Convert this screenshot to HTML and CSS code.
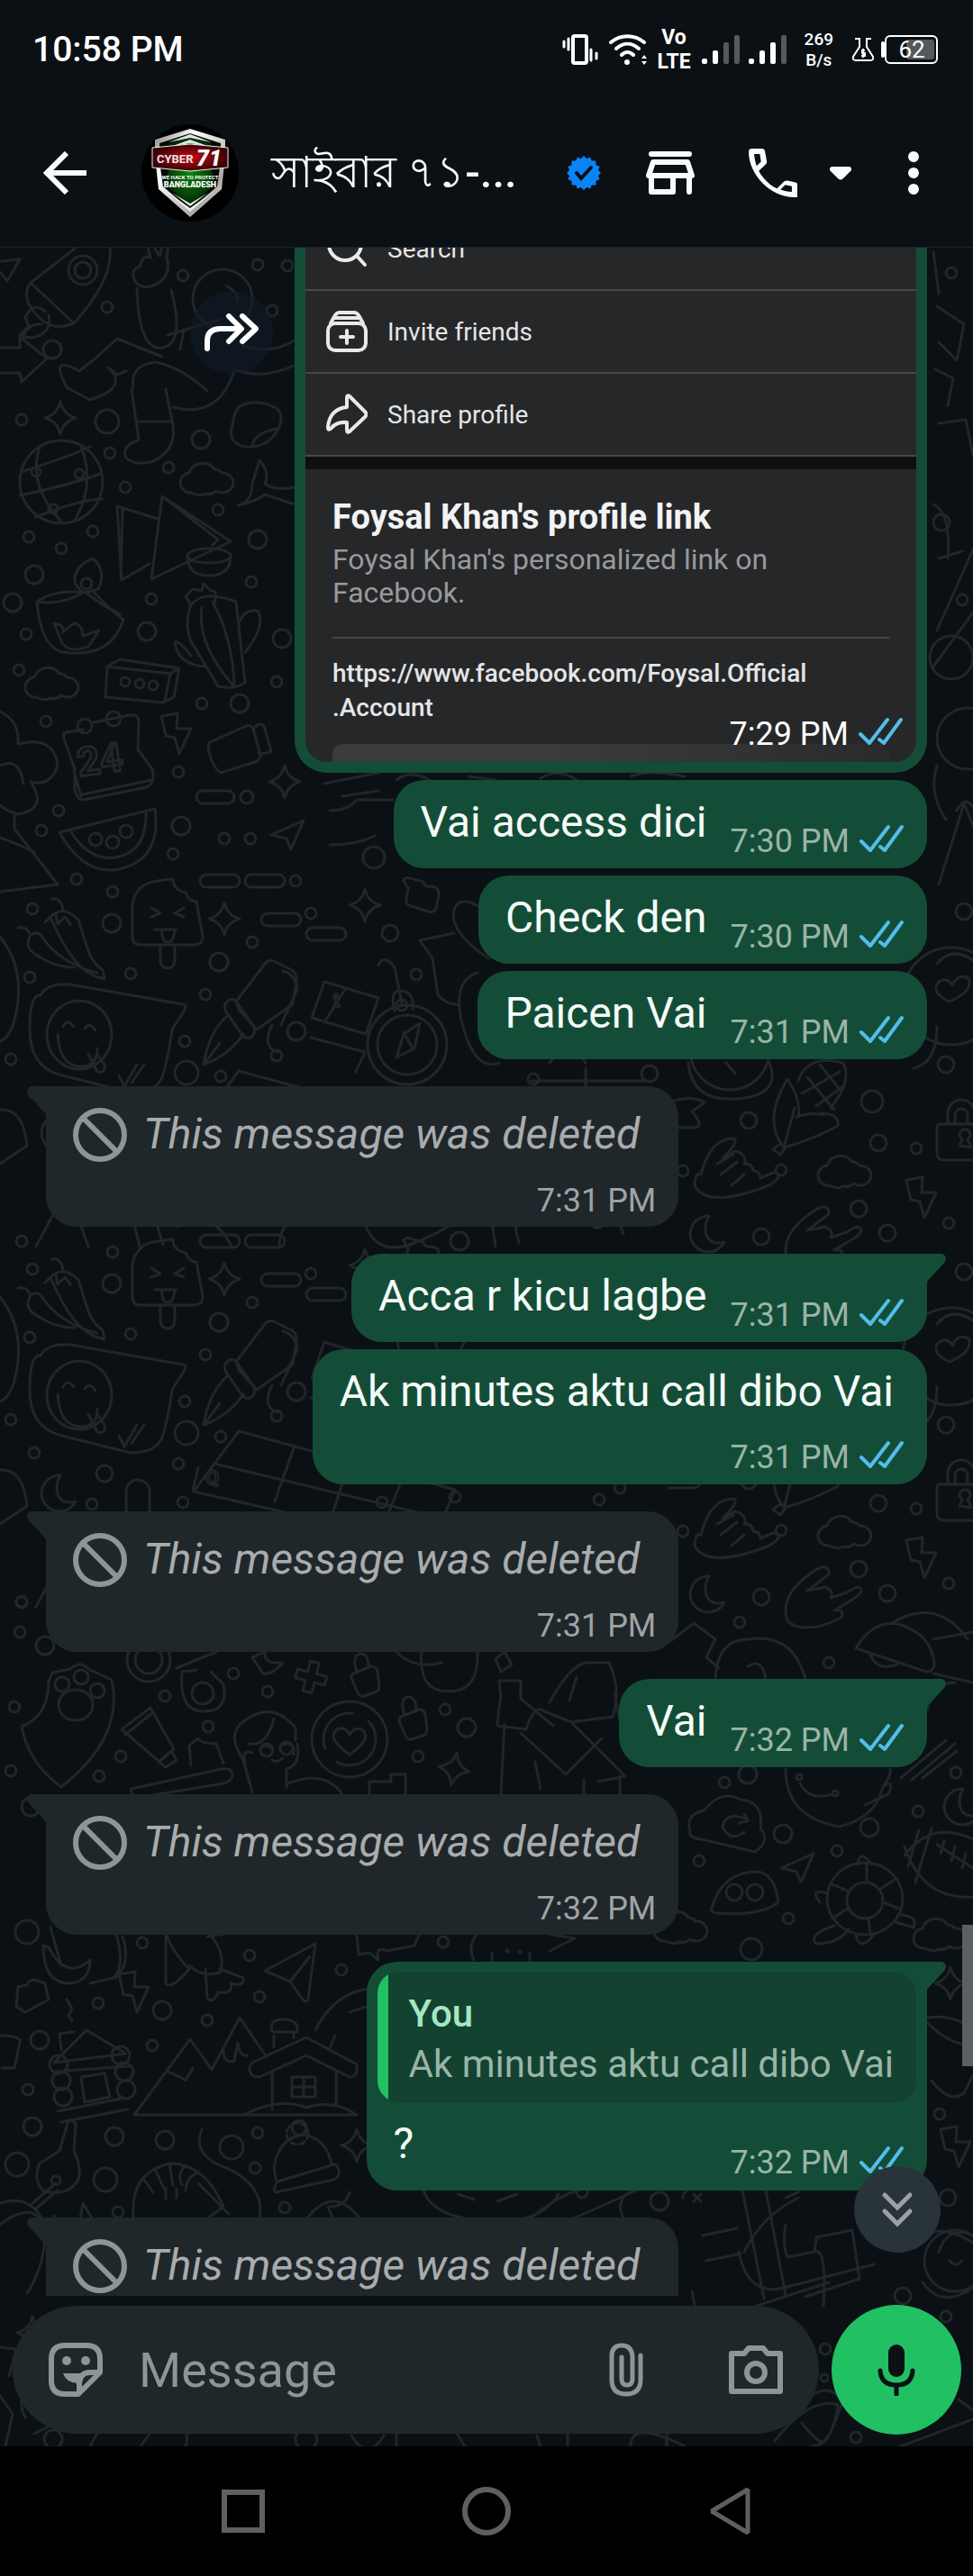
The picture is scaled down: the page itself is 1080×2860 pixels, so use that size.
FILE: index.html
```html
<!DOCTYPE html>
<html lang="en">
<head>
    <meta charset="UTF-8">
    <meta name="viewport" content="width=device-width, initial-scale=1.0">
    <title>Chat</title>
    <link rel="stylesheet" href="styles.css">
</head>
<body>
    <!-- shared icons -->
    <svg class="sprite" aria-hidden="true">
        <symbol id="ticks" viewBox="0 0 50 32">
            <path d="M3 19l10 10L33 3M24 25l5 4L48 3" fill="none" stroke="#53bdeb" stroke-width="4" stroke-linecap="round" stroke-linejoin="round"/>
        </symbol>
        <symbol id="blocked" viewBox="0 0 60 60">
            <circle cx="30" cy="30" r="27" fill="none" stroke="#8c9598" stroke-width="6"/>
            <path d="M11 11l38 38" stroke="#8c9598" stroke-width="6"/>
        </symbol>
    </svg>

    <div class="statusbar">
        <span class="clock">10:58 PM</span>
        <svg class="s-vibrate" width="40" height="34" viewBox="0 0 40 34" fill="none" stroke="#fff" stroke-linecap="round">
            <rect x="12" y="2" width="15" height="30" rx="2" stroke-width="4"/>
            <path d="M2 8v6M7 5v12M32 17v12M38 21v6" stroke-width="3"/>
        </svg>
        <svg class="s-wifi" width="42" height="34" viewBox="0 0 42 34" fill="none" stroke="#fff" stroke-width="4" stroke-linecap="round">
            <path d="M2 9c11-9 26-9 37 0M8 16c8-7 17-7 25 0M14 23c4-4 9-4 13 0"/>
            <circle cx="20" cy="31" r="3" fill="#fff" stroke="none"/>
            <path d="M36 27l3-4 3 4zM36 30l3 4 3-4z" fill="#fff" stroke="none"/>
        </svg>
        <span class="volte"><span>Vo</span><span>LTE</span></span>
        <svg class="s-signal" width="42" height="34" viewBox="0 0 42 34" fill="#fff">
            <rect x="0" y="27" width="6" height="6" rx="2"/><rect x="12" y="18" width="6" height="15" rx="2"/>
            <rect x="24" y="9" width="6" height="24" rx="2" fill="#55595c"/><rect x="36" y="1" width="6" height="32" rx="2" fill="#55595c"/>
        </svg>
        <svg class="s-signal2" width="42" height="34" viewBox="0 0 42 34" fill="#fff">
            <rect x="0" y="27" width="6" height="6" rx="2"/><rect x="12" y="18" width="6" height="15" rx="2"/>
            <rect x="24" y="9" width="6" height="24" rx="2"/><rect x="36" y="1" width="6" height="32" rx="2" fill="#55595c"/>
        </svg>
        <span class="speed"><span>269</span><span>B/s</span></span>
        <svg class="s-flask" width="26" height="28" viewBox="0 0 26 28" fill="none" stroke="#fff" stroke-width="2">
            <path d="M4 2h5v9L2 22q-1 4 3 4h16q4 0 3-4L17 11V2h5"/>
            <path d="M15 15h-3v3h3v3h-4M13 13v10"/>
        </svg>
        <svg class="s-battery" width="65" height="34" viewBox="0 0 65 34">
            <path d="M3 10v14" stroke="#fff" stroke-width="4" stroke-linecap="round"/>
            <rect x="29" y="6" width="31" height="22" rx="3" fill="#55595c"/>
            <rect x="6" y="2" width="57" height="30" rx="5" fill="none" stroke="#fff" stroke-width="2"/>
            <text x="35" y="26" class="battery-text" text-anchor="middle">62</text>
        </svg>
    </div>

    <header class="header">
        <button class="icon-btn back" aria-label="Back">
            <svg width="48" height="48" viewBox="0 0 48 48" fill="none" stroke="#f7fbfc" stroke-width="6" stroke-linejoin="miter">
                <path d="M26 2L4 24l22 22M4 24h44"/>
            </svg>
        </button>
        <svg class="avatar" width="108" height="108" viewBox="0 0 108 108">
            <defs>
                <radialGradient id="green"><stop offset="0" stop-color="#0c8a0c"/><stop offset="1" stop-color="#022a05"/></radialGradient>
                <radialGradient id="red"><stop offset="0" stop-color="#c80a12"/><stop offset="1" stop-color="#3a0205"/></radialGradient>
                <linearGradient id="silver" x2="1" y2="1"><stop offset="0" stop-color="#777"/><stop offset=".3" stop-color="#fff"/><stop offset=".75" stop-color="#aaa"/><stop offset="1" stop-color="#fff"/></linearGradient>
            </defs>
            <circle cx="54" cy="54" r="54" fill="#000"/>
            <path d="M54 5L15 17v19l4 36 35 31 35-31 4-36V17z" fill="url(#silver)"/>
            <path d="M54 10L20 21v20l4 28 30 26 30-26 4-28V21z" fill="#020a03"/>
            <path d="M54 14L31 21v26l-5 20 28 22 28-22-5-20V21z" fill="url(#green)"/>
            <path d="M30 20l24-9 24 9-24-5zM32 25l22-8 22 8-22-4z" fill="#dfe8df"/>
            <path d="M26 73l28 20 28-20-28 24zM34 76l20 15 20-15-20 12z" fill="#e8efe8"/>
            <path d="M12 26l42-4 42 4v22l-42 4-42-4z" fill="url(#red)" stroke="#eee" stroke-width="1"/>
            <text x="17" y="43" class="av-cyber">CYBER</text>
            <text x="61" y="46" class="av-71">71</text>
            <text x="54" y="61" class="av-line" text-anchor="middle">WE HACK TO PROTECT</text>
            <text x="54" y="70" class="av-name" text-anchor="middle">BANGLADESH</text>
        </svg>
        <h1 class="title" lang="bn">সাইবার ৭১-...</h1>
        <svg class="badge" width="38" height="38" viewBox="-19 -19 38 38">
            <g fill="#0a84f5">
                <circle r="16"/>
                <path d="M0-19l6 6h-12zM0 19l6-6h-12zM19 0l-6 6v-12zM-19 0l6 6v-12z"/>
                <path d="M0-19l6 6h-12zM0 19l6-6h-12zM19 0l-6 6v-12zM-19 0l6 6v-12z" transform="rotate(22)"/>
                <path d="M0-19l6 6h-12zM0 19l6-6h-12zM19 0l-6 6v-12zM-19 0l6 6v-12z" transform="rotate(45)"/>
                <path d="M0-19l6 6h-12zM0 19l6-6h-12zM19 0l-6 6v-12zM-19 0l6 6v-12z" transform="rotate(68)"/>
            </g>
            <path d="M-8 0l5 6L8-6" fill="none" stroke="#0b1014" stroke-width="4" stroke-linecap="round"/>
        </svg>
        <button class="icon-btn store" aria-label="Catalog">
            <svg width="54" height="48" viewBox="0 0 54 48" fill="none" stroke="#f7fbfc" stroke-width="6" stroke-linecap="round" stroke-linejoin="round">
                <path d="M6 3h42M8 12h38l5 15H3zM6 28v17h24V28M48 28v17"/>
            </svg>
        </button>
        <button class="icon-btn phone" aria-label="Call">
            <svg width="54" height="54" viewBox="0 0 24 24" fill="#f7fbfc">
                <path d="M22.600 24q-4.200 0-8.300-1.800t-7.400-5.100q-3.300-3.300-5.100-7.400T0 1.400Q0 .8.400.4T1.400 0h5.200q.5 0 .9.300t.5.800L8.900 6q.1.600 0 1t-.4.700L5 11q.7 1.400 1.700 2.700t2.200 2.400q1.200 1.200 2.400 2.100t2.700 1.500l3.200-3.300q.4-.4.900-.5t1-.1l4 .9q.6.200.9.500t.3.900v5.400q0 .6-.4 1t-1.300.4zM3.900 8.500L6.100 6.400 5.500 2.700H2.700q.1 1.500.4 2.900t.8 2.900zM15.700 20.200q1.300.6 2.700.8t2.900.3v-2.800L18 17.900z"/>
            </svg>
        </button>
        <button class="icon-btn caret" aria-label="Call options">
            <svg width="24" height="15" viewBox="0 0 24 15" fill="#f7fbfc">
                <path d="M3 0h18q3 0 3 3 0 2-2 3l-7 7q-3 3-6 0L2 6Q0 5 0 3q0-3 3-3z"/>
            </svg>
        </button>
        <button class="icon-btn more" aria-label="More">
            <svg width="12" height="48" viewBox="0 0 12 48" fill="#f7fbfc">
                <circle cx="6" cy="6" r="6"/><circle cx="6" cy="24" r="6"/><circle cx="6" cy="42" r="6"/>
            </svg>
        </button>
    </header>

    <main class="chat">
        <!-- doodle wallpaper, the middle band repeats 400 lower -->
        <svg class="wallpaper" viewBox="0 275 1080 2441" preserveAspectRatio="xMidYMin slice" aria-hidden="true">
            <defs>
                <path id="star" d="M0-18Q3-4 17 0Q3 4 0 18Q-3 4-17 0Q-3-4 0-18z"/>
                <path id="bolt" d="M-16-20L2-23 1-6 17-6 4 22-1 4-11 2z"/>
                <path id="cloud" d="M-20 13a11 11 0 0 1-2-22a16 16 0 0 1 28-4a10 10 0 0 1 8 4a12 11 0 1 1-6 20q-6 5-12 3q-6 4-16-1z"/>
                <path id="plane" d="M-18 2L18-14 4 18-1 6z"/>
                <path id="moon" d="M3-20a20 20 0 1 0 17 29q-16 4-20-8-3-11 3-21z"/>
                <path id="padlock" d="M-26-14h52q6 0 6 6v26q0 8-8 8h-44q-8 0-8-8V-8q0-6 2-6zM-16-14v-12a14 14 0 0 1 30 0v12M-8-14v-10a7 7 0 0 1 14 0v10M-3 10l3-7a6 6 0 1 1 6 0l4 9z"/>
                <path id="smalllock" d="M-12-6l20-8q6 0 7 6l2 16q0 5-5 7l-12 4q-5 1-7-4l-7-16q0-4 2-5zM-8-8q-6-18 4-20 9 0 9 14"/>
                <path id="plus" d="M-5-18h10v12h12v10h-12v12h-10v-12h-12v-10h12z"/>
                <g id="pop">
                    <path d="M-30-40q6-8 36-10q0 12 14 15q4 10 12 10l7 38q1 9-9 10h-60q-9 0-9-9v-36q1-10 9-18zM-8 23v18q1 8 8 8t8-8V23"/>
                    <path d="M-18-18l10 6-10 4M18-18l-10 6 10 4M-14 6h24M-6 6q-1 14 6 14t8-14"/>
                </g>
                <g id="band">
                    <use href="#pop" x="186" y="1026"/><use href="#star" x="249" y="1020"/>
                    <rect x="222" y="971" width="44" height="14" rx="7"/><rect x="272" y="971" width="44" height="14" rx="7"/>
                    <rect x="290" y="1014" width="44" height="14" rx="7"/><rect x="340" y="1030" width="44" height="14" rx="7"/>
                    <path d="M57 998q12-2 13 14M56 1018q14-14 31 3l10 32q5 16 17 24l2 10q-20-4-34-22t-26-47zM20 1030q10-2 14 8q8-6 14 4q20 28 60 38M34 1038q-8 14 6 22q20 14 42 14M56 1018l-6 6M62 1016l2 10 8-8 6 8"/>
                    <path d="M78 1093l125 22q5 1 2 6l-14 22q-4 30-10 50t-36 20l-80-20q-32-10-32-50t12-38q8-14 33-12z"/>
                    <ellipse cx="88" cy="1149" rx="36" ry="38"/><path d="M70 1140q5-10 12 0M94 1142q5-8 12 2M64 1148q2 36 26 36 18 0 18-20M98 1170l10 20q10 2 8-8l-8-12M132 1194l6 12 14-24M146 1202l14-20"/>
                    <path d="M262 1112l32-42q4-5 10-3l20 10q6 4 5 12l-4 26-40 28-20-22zM252 1112q6-6 12 2l18 26q2 8-4 12q-6 2-10-4l-18-26q-2-6 2-10zM252 1128q-20 18-26 54q28-10 44-34M226 1182l18-24M314 1078q14 4 16 20l-18 40M302 1138q-12 24 6 30"/>
                    <path d="M265 1189l240 65-26 62-264-60zM327 1205l-22 62M388 1222l-20 62M448 1238l-24 60M238 1225l250 60M220 1230l-6 24M360 1090l60 18-14 40-60-18zM384 1097l-24 38M345 1152l60 16-10 22"/>
                    <text x="228" y="1248" class="doodle-text small">Q</text><text x="370" y="1118" class="doodle-text small">t</text>
                    <use href="#moon" x="64" y="1258"/>
                    <path d="M140 1290v-34a12 12 0 0 1 26 0v36a18 18 0 0 1-38 2M0 1232q26-2 30 40l-30 20M0 1040q24 30 20 70t-20 46"/>
                    <path d="M40 1384l18-34q12-20 28 0l12 34M155 1384l-10-40 22-8 14 46M196 1362q40-20 60 20M310 1384q0-40 56-40M400 1340q10 60 60 40t60-40M550 1384l-6-40h24l8 36M650 1350q10 22 22 8t20 12"/>
                    <circle cx="452" cy="1160" r="44"/><circle cx="452" cy="1160" r="33"/><path d="M440 1174l8-26 18-12-6 28zM448 1146l10 18M420 1072q6-14 18 2l8 40M438 1122q-6-24 8-22t12 20"/><circle cx="446" cy="1116" r="6"/>
                    <path d="M448 978q2-6 10-2l12 3q0 6 10 5 8 2 7 10l-3 14q-2 6-8 4l-20-6q-6-2-5-8l2-12z"/><use href="#star" x="405" y="1005"/>
                    <path d="M542 1064q-44-30-38-54 4-12 18-8l14 6 14-14M466 1044l38-8M466 1044l14 20 6 40q6 10 24 12M530 1080q-30 10-16 60t40 40"/>
                    <path d="M610 1180q20-30 40 0M590 1200h130M650 1186v30"/>
                    <path d="M764 1180q4 44 54 40t36-40M806 1180l10 12M1040 1140q0 40-26 46"/><circle cx="810" cy="1166" r="44"/><circle cx="1056" cy="1106" r="54"/><path d="M1054 1112q-22-10-12-22 10-6 15 4 6-14 18-8 6 14-21 26zM1080 1066q-24-16-40 4"/>
                    <path d="M882 1230l-12 44q30-8 60-24 2-14-20-14M870 1274q-24-30 4-76 16 24 12 42M866 1270l-8 6 8 6 6-8M886 1200q10-30 50-20 10 20-14 50M890 1214l42-24M896 1196l30 36M910 1182l24 30M906 1228l30-22M884 1240q16-6 30-2"/>
                    <path d="M748 1222q20-6 34 2l-14 10q16 18 0 18h-26M778 1304q10-40 36-40 8 2-12 22l14-8q14 4 10 14 10 0 10 8 8 0 8 8l14-6q14 2-4 14-46 18-68 12-22-8-12-24zM796 1292l18-10M800 1304l18-14M812 1316l14-12"/>
                    <use href="#cloud" x="940" y="1303"/><use href="#bolt" x="1022" y="1330"/><use href="#moon" x="784" y="1370"/>
                    <path d="M874 1400q-10-30 30-56 16-10 16 4l-24 18 20-4q10 4 6 12l18-6 10-6q14 2-4 14l-20 12q12-2 8 8-40 20-60 4z"/>
                    <use href="#padlock" x="1068" y="1262"/>
                    <circle cx="831" cy="1244" r="9"/><circle cx="968" cy="1223" r="12"/><circle cx="975" cy="1269" r="9"/><circle cx="1017" cy="1275" r="6"/><circle cx="867" cy="1299" r="6"/><circle cx="953" cy="1342" r="9"/><circle cx="845" cy="1373" r="9"/><circle cx="985" cy="1369" r="9"/><circle cx="1053" cy="1358" r="6"/><circle cx="758" cy="1300" r="6"/><circle cx="721" cy="1192" r="9"/><circle cx="592" cy="1198" r="6"/><circle cx="688" cy="1252" r="6"/><circle cx="1050" cy="1182" r="9"/>
                    <circle cx="125" cy="990" r="6"/><circle cx="36" cy="1009" r="6"/><circle cx="124" cy="1025" r="10"/><circle cx="280" cy="1046" r="6"/><circle cx="243" cy="1068" r="10"/><circle cx="145" cy="1081" r="6"/><circle cx="33" cy="1085" r="6"/><circle cx="228" cy="1104" r="6"/><circle cx="205" cy="1156" r="6"/><circle cx="329" cy="1145" r="10"/><circle cx="12" cy="1176" r="6"/><circle cx="207" cy="1191" r="13"/><circle cx="245" cy="1195" r="6"/><circle cx="38" cy="1213" r="6"/><circle cx="198" cy="1225" r="6"/><circle cx="116" cy="1236" r="9"/><circle cx="307" cy="1172" r="6"/><circle cx="102" cy="1270" r="6"/><circle cx="203" cy="1268" r="6"/><circle cx="424" cy="1268" r="6"/><circle cx="505" cy="1262" r="6"/><circle cx="24" cy="1378" r="6"/><circle cx="433" cy="1036" r="9"/><circle cx="462" cy="1082" r="6"/><circle cx="345" cy="1014" r="6"/><circle cx="1070" cy="1012" r="9"/><circle cx="510" cy="1378" r="10"/><circle cx="665" cy="1265" r="6"/>
                </g>
            </defs>
            <g class="doodles">
                <!-- upper strip -->
                <path d="M34 314L82 359C60 368 46 360 32 338Q26 324 34 314L84 275M122 275Q126 310 82 359"/><circle cx="92" cy="300" r="16"/><circle cx="92" cy="300" r="9"/>
                <path d="M50 346q-12-12-22 6l4 10-10 10q10 4 18 2 18-6 14-24M26 372q8-14 20-12M0 290l22-2-14 24-8-10M0 386h22l0-12 30 24-28 26-2-10H0"/>
                <path d="M151 314q-8-14 4-18 4-14 12-10l-4-16q6-6 10 8l4 6 4-14q8-2 4 16 6 20-12 30-14 6-22-2zM152 320q2 70 28 66t10-64M180 396l-50-20-22 20-20 16q-34-20-14 18l26 14q44-14 20-36l10 8 10-4"/>
                <path d="M148 430q-4-24 24-28 30 6 58 32M146 432l8 56q-20 8-14 20 10 10 30 4 26-12 22-40l-8-40M152 468h38M192 452q50 14 68-40"/>
                <circle cx="247" cy="332" r="33"/><path d="M186 372l60-18M200 388l4-22M270 384q30 10 57-6M260 410q30 12 66-4M252 318q12 6 12 16"/>
                <use href="#star" x="67" y="464"/><circle cx="68" cy="535" r="46"/><path d="M24 524q60-20 76-28M22 550q50-10 90-24M40 574q50-20 74-20M44 497q-14 40 24 82M90 496q16 40-6 80"/><circle cx="40" cy="524" r="5"/><circle cx="88" cy="526" r="5"/><circle cx="59" cy="565" r="5"/>
                <path d="M268 450q20-8 40 4 8 8 0 24-12 20-36 18-20-4-14-24 2-18 10-22zM280 496q2-16 28-20"/>
                <use href="#cloud" x="232" y="534"/><use href="#cloud" x="60" y="761"/>
                <path d="M264 561q16-4 16-24l8-26q12 14 6 26 10 8 34 4M264 561q20-4 30-12l36 12"/>
                <path d="M130 562l45 14M130 562l5 82 31-18M136 566l-2 76M180 551l76 50-88 42zM180 551l62 48-6 6M168 643l42-20"/><ellipse cx="232" cy="617" rx="24" ry="8"/><path d="M208 617q0 22 24 22t24-22"/>
                <path d="M41 668q20-14 50-10l12-2q20 22 34 32-14 44-68 36-24-6-28-56zM41 668q24 4 48-8M96 658q16 14 38 24M83 640q4-14 20-20 16 14 6 34l-16 4q-12-8-10-18z"/><circle cx="96" cy="648" r="6"/><path d="M60 692q12 2 10 10 10-10 14-10 8 4 8 14l18-6-12 18q-24 8-30-6z"/>
                <path d="M212 672q12-18 50-4l10 90q-12 8-30 4l-30-50q-8-20 0-40zM224 674q-6 40 34 86M236 668q22 40 24 92M212 672l-6-10 8-8 10 2 2-8 8 8q8-2 4 14M266 690q6-14 20-12 10 16-14 46M212 728q-16-20-18-14 4 24 34 26"/>
                <path d="M119 740l14-8 66 10-6 32-12 6-64-6zM119 740l70 8 10-6M189 748l-6 30"/><circle cx="139" cy="757" r="5"/><circle cx="155" cy="759" r="5"/><circle cx="170" cy="761" r="5"/>
                <path d="M70 814l22-4M104 802l40-8q10-2 10 8l-1 30 16 22q4 14-6 20l-70 14q-8 0-10-12V854l-12-34q-2-6 4-8M82 856l8 28M92 882l76-16"/><circle cx="94" cy="806" r="8"/><circle cx="126" cy="798" r="8"/>
                <text x="88" y="862" class="doodle-text" transform="rotate(-8 88 862)">24</text>
                <use href="#bolt" x="195" y="815"/><path d="M233 824l40-18q6-2 8 4l8 28q0 6-6 8l-38 12q-6-4-10-14-6-16-2-20zM281 810q8-10 12-4l8 28q-6 4-14 2"/>
                <use href="#star" x="316" y="868"/><rect x="218" y="878" width="42" height="14" rx="7"/><use href="#plane" x="319" y="925"/>
                <path d="M66 924l106-26q8 60-46 68-36 2-60-42zM78 922q20 34 50 30 36-6 34-52"/><circle cx="106" cy="932" r="7"/><circle cx="125" cy="935" r="7"/><circle cx="140" cy="923" r="7"/>
                <path d="M0 790q22 10 20 36q40-10 44 24-8 24-30 18 20 30-14 36-14-4-20-10M0 850q22-10 26 20M0 990l64-8L16 920v-18M0 930q22 8 38 16"/>
                <path d="M1036 280l6 46M1040 340l30 20-8 40-20-20M1038 410l20 10-6 30M1042 470l30-4 8 40M1036 560q20 10 16 60M1042 620l26-8M1040 700l40-90M1036 740l44-60"/><circle cx="1056" cy="303" r="6"/><circle cx="1045" cy="580" r="9"/><circle cx="1068" cy="666" r="6"/><circle cx="1056" cy="730" r="24"/><circle cx="1074" cy="820" r="34"/>
                <path d="M1042 982l28-90 20 50M1062 900q10-20 20 0M1040 850q-10 30 10 60"/>
                <path d="M360 870l60-12M380 884l40-6M440 866q20-16 50 10M520 862l30 4M600 864q20-12 40 2M700 862q20-8 60 0M366 900q20 0 30-12h40M366 938q30 0 50-10"/><circle cx="415" cy="952" r="12"/>
                <circle cx="24" cy="466" r="6"/><circle cx="58" cy="388" r="10"/><circle cx="119" cy="341" r="6"/><circle cx="119" cy="468" r="13"/><circle cx="122" cy="503" r="6"/><circle cx="203" cy="306" r="6"/><circle cx="286" cy="294" r="6"/><circle cx="319" cy="295" r="6"/><circle cx="302" cy="345" r="6"/><circle cx="223" cy="488" r="10"/><circle cx="187" cy="519" r="6"/><circle cx="139" cy="541" r="6"/><circle cx="242" cy="566" r="6"/><circle cx="32" cy="596" r="6"/><circle cx="68" cy="609" r="6"/><circle cx="103" cy="590" r="6"/><circle cx="38" cy="638" r="10"/><circle cx="14" cy="669" r="10"/><circle cx="29" cy="704" r="6"/><circle cx="163" cy="701" r="10"/><circle cx="168" cy="665" r="6"/><circle cx="286" cy="599" r="10"/><circle cx="279" cy="646" r="6"/><circle cx="313" cy="709" r="10"/><circle cx="307" cy="757" r="6"/><circle cx="21" cy="744" r="6"/><circle cx="224" cy="781" r="6"/><circle cx="266" cy="781" r="10"/><circle cx="51" cy="801" r="6"/><circle cx="198" cy="857" r="6"/><circle cx="274" cy="885" r="7"/><circle cx="65" cy="900" r="6"/><circle cx="46" cy="922" r="6"/><circle cx="201" cy="917" r="10"/><circle cx="192" cy="948" r="6"/><circle cx="249" cy="931" r="6"/><circle cx="278" cy="931" r="6"/><circle cx="85" cy="976" r="6"/><circle cx="328" cy="978" r="6"/>

                <use href="#band"/>
                <use href="#band" y="400"/>

                <!-- lower part -->
                <path d="M24 1917q30-12 30-50l4-10 20-4q12-10 20 0l26 12q14 64-56 119-36-26-44-67z"/><circle cx="69" cy="1870" r="8"/><circle cx="90" cy="1862" r="8"/><circle cx="108" cy="1877" r="8"/><ellipse cx="84" cy="1893" rx="19" ry="17"/>
                <path d="M135 1920l32-24 26 46-16 14zM139 1926l30-24M176 1956l14-12 6 10-12 8zM146 1986l100-22q12-2 12 8-2 6-10 8l-96 16q-8-2-6-10zM212 1960l-2-22 10-8q4 6 20 6l8 22"/>
                <circle cx="165" cy="1843" r="15"/><circle cx="165" cy="1843" r="24"/><circle cx="225" cy="1880" r="12"/><path d="M202 1856l16-2M202 1856q-4 44 24 44t22-30l-14-14M240 1834l-44 18"/>
                <path d="M280 1990l-10-36q-20-30 2-44 30-22 56 8v14M276 1936q20 4 28-28M330 1936q4 24-12 28v20M272 1956q-4-14 8-10M288 1942q8-8 14 0M310 1940q8-8 16 0v8M302 1954q6 4 12-2"/><circle cx="296" cy="1943" r="7"/><circle cx="318" cy="1941" r="7"/>
                <circle cx="388" cy="1931" r="42"/><circle cx="388" cy="1931" r="29" stroke-dasharray="60 20"/><path d="M388 1948q-26-18-14-28 10-4 14 6 6-10 15-5 10 10-15 27z"/>
                <use href="#smalllock" x="404" y="1864"/><use href="#smalllock" x="457" y="1912"/><use href="#star" x="504" y="1964" transform="rotate(10 504 1964)"/><use href="#plus" x="345" y="1863" transform="rotate(14 345 1863)"/>
                <path d="M440 1834q20 20 50 12M468 1834q-4 44 30 44t32-44M550 1842l10-8 8 14-12 8zM610 1890q22-40 40-44h26q14 30 4 60l-46 6M634 1912l-30-12q-10-10-20 20l-32-4q2-26 4-30l-2-20h24v20l36 30M560 1914l-4 78M578 1924l50 46 40-40M594 1956l6 30M648 1976v16M688 1972v20M634 1912l60 60-30 6M640 1862l-8 26M682 1880l6 30"/>
                <path d="M410 1992v-14h24v-8h16v22M320 1980q40-16 60 12M280 1840l14-6q-2 14 20 12-12 14-22 12z"/>
                <path d="M744 1822l26-20 24 18-10 20 14 12M794 1864q2-44 36-44 50-8 64 44M830 1850q16-10 20 14"/><path d="M950 1830q20-34 50-26 30 10 36 36 4 16-8 16zM990 1802q50-30 84 18M1036 1820l44-8M1036 1858l44 10M966 1836q6 20 30 12M1060 1868q-30 0-30 30"/>
                <path d="M872 1964q0 54 60 64 40-10 48-44 10-14 8-20M888 1980q10 20 36 12M980 1984q14-10 6 8l-26 12M1000 1974l50-42M1012 1976l48-40M1024 1974l38-30"/><circle cx="887" cy="1973" r="3"/><circle cx="927" cy="1991" r="3"/>
                <path d="M766 2034q-6-20 16-24 18-24 40-12 26 2 22 32 12 14-6 26l-60-14q-14-2-12-8zM830 2020q-24-10-28 8 8 18 24 6M826 2014l4 8-10 2"/>
                <path d="M790 2118q12-40 50-40 20 2 24 34-20 16-70 12-6-2-4-6z"/><circle cx="815" cy="2101" r="9"/><circle cx="838" cy="2101" r="9"/><use href="#plane" x="885" y="2072"/><use href="#cloud" x="758" y="2142"/><use href="#cloud" x="1046" y="2150"/>
                <ellipse cx="960" cy="2108" rx="42" ry="40"/><ellipse cx="960" cy="2110" rx="20" ry="20"/><path d="M952 2070q2-18 16 0M918 2102q-20-6-8 10M926 2138q-30 10-20 20 24 0 36-16M996 2126q24 0 18 14l-20-6M950 2148q4 20 20 0M962 2070v20M924 2092l18 8M924 2130l18-12M966 2148l-2-18M1000 2120l-20-8M994 2086l-18 12M1004 2060q30-40 76-18M1004 2050q20 60 76 56M1020 2032l-12 40M1034 2030l-18 60M1040 2048l40 26M1048 2044l-4 14M1060 2050l-4 16M1072 2058l-4 16"/>
                <use href="#moon" x="1066" y="2006"/><use href="#star" x="1055" y="2202"/><path d="M1030 2240q30-4 50 14M1030 2246q20 22 50 26M1034 2310q20 26 36 14l10-20M1064 2330"/><use href="#bolt" x="1060" y="2384"/>
                <path d="M56 2140l12 42M128 2144q12 40-2 52l-26 6M136 2150q10 30-8 46M48 2160q0 44 32 42 20-4 20-26-26 24-46-14zM20 2206l10-2q2-6 8-6l12 4 4 18-26 14-10-6zM74 2220l6 10-4 8 4 6M184 2146v56q6 8 26-16-20-20-26-40zM210 2182q14 14 34 8 8-20-12-44M244 2186l26 10q2 10-14 6 4 12-14 10-6 14-12 6l-2-32M230 2150l40-6"/>
                <path d="M0 2260q24 0 22 8l-6 28h-14M66 2284l30-30 44 26-80 10zM68 2276l-2-18 16-2M60 2300l84-6M90 2306l26-4 6 26-28 6zM64 2344l70-14M68 2356l74-14"/><circle cx="65" cy="2292" r="10"/><circle cx="68" cy="2310" r="10"/><circle cx="70" cy="2328" r="10"/><circle cx="134" cy="2282" r="10"/><circle cx="138" cy="2300" r="10"/><circle cx="140" cy="2320" r="10"/>
                <path d="M149 2348l62-84 24 34 31-58 30 44M186 2300l14 6 6 4 8-14M248 2276q0 16 12 12 4-20 4-20 2 16 10 14M149 2348h246M270 2348q40-20 70-8 30-10 56 8M302 2300v42M373 2300v38M280 2304q-8-10 4-16l56-26 56 30q2 14-8 14l-48-24-52 24q-6 0-8-2zM324 2306h26v22h-26zM337 2306v22M324 2317h26M304 2272v-12M326 2262v-6M302 2256q-4-14 12-14 18 0 16 14zM350 2254q20-40 58-46M366 2274l6-14M388 2234l18-6"/>
                <path d="M76 2354q8 0 8 6l-2 28q10 20 4 34-14 18-38 10-12-12-4-30l22-14zM36 2446l26-22M40 2452l24-20M0 2446q30-10 46 16"/><circle cx="62" cy="2421" r="5"/>
                <path d="M148 2462q-4-50 40-60 40 0 60 48l-16 12M160 2420l10 14M172 2408l10 22M188 2402l4 24M206 2404q-10 10-4 22M220 2412q-14 6-14 20M184 2430v12M196 2430v10M224 2364q-12 30 30 44 40 20 34 54M220 2424l34 34"/>
                <path d="M306 2420l-2-14q6-34 34-36 26 6 30 34l-60 18q-6 10-2 12l64-14q10-4 4-16l-6-2M330 2370a8 8 0 1 1 4 0M340 2464q30-40 60 0M370 2464l-6-14q20 0 24-16"/><circle cx="330" cy="2369" r="12" stroke-dasharray="6 4"/>
                <path d="M294 2188l56-30-8 62q-2 4-6 0l-14-20zM322 2200l22-28"/><use href="#bolt" x="148" y="2212"/><use href="#star" x="396" y="2382"/>
                <path d="M396 2148l2 22 12-2 10 8q-4-16 10-10l30-6 6-14M526 2176q-8-14 4-30M612 2148l26 4-28 14M546 2168v10M588 2178v-10"/><circle cx="563" cy="2166" r="1"/><circle cx="577" cy="2167" r="1"/>
                <path d="M470 2432q10 30 70 34t80-30M508 2436l18 6M552 2444l22-8M590 2462q60-50 112-30-20 10-10 30M630 2466l76-34M850 2432l22 116M758 2440q0-8 10-10l54-8 26 130M780 2482l38-8M784 2510l38-8M768 2544l8 40M872 2440l14-6 10-20 20 10 20-14 40 30M826 2500q20-40 60-60M872 2470q-4 20 2 36l30-6q14-6 10 60M904 2500l2-16 40-8 8 54-60 20M820 2500q10 50 50 40l100-26M840 2560l80-26M1000 2500q30-40 80-10M1024 2534q20 30 56 6M1042 2500q10-30 38-18M1054 2510q6 8 14 0"/>
                <path d="M770 2436l8 8M778 2436l-8 8"/><circle cx="1060" cy="2510" r="34"/><circle cx="1002" cy="2549" r="9"/><circle cx="1050" cy="2572" r="6"/><circle cx="916" cy="2608" r="6"/><circle cx="915" cy="2640" r="4"/>
                <path d="M0 2470q40-30 50 6 0 40-20 70M60 2460l26 40M86 2480l6-34 24 40M0 2606l18 2-8 30M0 2660l14 20-8 36M28 2684q-10-20 4-34l30 40-24 12M100 2716l16-30M156 2716l20-28 30 10q6 20-10 26M390 2704q18 30 36 0M440 2716v-20l60-6 16 26M596 2704l6 20M700 2716q0-30 60 0M860 2710q40-50 70-40-6 46-30 46M896 2664q20-20 40 0-14 40-20 46t-26-20M1000 2716l80-30M1064 2664l16 12M630 2716v-20M740 2716v-16"/><use href="#star" x="36" y="2590"/><circle cx="59" cy="2708" r="10"/><circle cx="340" cy="2708" r="12"/><circle cx="950" cy="2706" r="6"/>
                <circle cx="183" cy="1883" r="6"/><circle cx="259" cy="1858" r="6"/><circle cx="297" cy="1878" r="6"/><circle cx="231" cy="1917" r="6"/><circle cx="134" cy="1950" r="6"/><circle cx="110" cy="1972" r="6"/><circle cx="494" cy="1898" r="6"/><circle cx="518" cy="1918" r="10"/><circle cx="464" cy="1950" r="6"/><circle cx="24" cy="1779" r="6"/><circle cx="22" cy="1812" r="6"/><circle cx="50" cy="1827" r="10"/><circle cx="16" cy="1895" r="6"/><circle cx="12" cy="1966" r="6"/><circle cx="34" cy="2006" r="10"/><circle cx="30" cy="2145" r="13"/><circle cx="158" cy="2157" r="6"/><circle cx="277" cy="2171" r="6"/><circle cx="379" cy="2187" r="6"/><circle cx="492" cy="2156" r="6"/><circle cx="109" cy="2224" r="6"/><circle cx="180" cy="2232" r="10"/><circle cx="288" cy="2217" r="6"/><circle cx="230" cy="2243" r="6"/><circle cx="44" cy="2265" r="10"/><circle cx="169" cy="2271" r="6"/><circle cx="31" cy="2320" r="6"/><circle cx="36" cy="2361" r="10"/><circle cx="127" cy="2372" r="10"/><circle cx="183" cy="2376" r="10"/><circle cx="286" cy="2368" r="6"/><circle cx="257" cy="2384" r="13"/><circle cx="19" cy="2403" r="13"/><circle cx="117" cy="2420" r="13"/><circle cx="283" cy="2407" r="6"/><circle cx="316" cy="2451" r="6"/><circle cx="131" cy="2456" r="6"/><circle cx="821" cy="1801" r="6"/><circle cx="920" cy="1846" r="6"/><circle cx="804" cy="1979" r="6"/><circle cx="830" cy="1970" r="10"/><circle cx="869" cy="2036" r="10"/><circle cx="776" cy="2066" r="6"/><circle cx="965" cy="2029" r="10"/><circle cx="929" cy="2055" r="6"/><circle cx="1019" cy="2011" r="6"/><circle cx="1061" cy="1968" r="6"/><circle cx="875" cy="2130" r="6"/><circle cx="834" cy="2164" r="12"/><circle cx="646" cy="2434" r="6"/><circle cx="732" cy="2444" r="10"/><circle cx="1052" cy="2440" r="9"/><circle cx="1043" cy="2347" r="6"/>
            </g>
        </svg>

        <div class="messages">
            <div class="msg out photo">
                <button class="forward" aria-label="Forward">
                    <svg width="60" height="42" viewBox="0 0 60 42" fill="none" stroke="#fff" stroke-width="6" stroke-linecap="round" stroke-linejoin="round">
                        <path d="M3 39v-8Q3 17 18 17h22M27 3l14 14-14 14M42 3l15 14-15 14"/>
                    </svg>
                </button>
                <div class="shot">
                    <div class="row cut">
                        <svg width="46" height="46" viewBox="0 0 46 46" fill="none" stroke="#e8e9eb" stroke-width="4" stroke-linecap="round"><circle cx="21" cy="20" r="18"/><path d="M34 33l9 10"/></svg>
                        <span>Search</span>
                    </div>
                    <div class="row">
                        <svg width="46" height="46" viewBox="0 0 46 46" fill="none" stroke="#e8e9eb" stroke-width="4" stroke-linecap="round" stroke-linejoin="round"><rect x="2" y="14" width="42" height="30" rx="8"/><path d="M5 14l5-9q2-3 5-3h16q3 0 5 3l5 9M10 8h26M23 22v14M16 29h14"/></svg>
                        <span>Invite friends</span>
                    </div>
                    <div class="row">
                        <svg width="46" height="46" viewBox="0 0 46 46" fill="none" stroke="#e8e9eb" stroke-width="4" stroke-linejoin="round"><path d="M23 5q0-4 3-2l17 17q3 3 0 6L26 42q-3 2-3-2v-8Q12 31 6 38q-4 4-4-1 2-20 21-22z"/></svg>
                        <span>Share profile</span>
                    </div>
                    <div class="info">
                        <h2>Foysal Khan's profile link</h2>
                        <p>Foysal Khan's personalized link on Facebook.</p>
                        <div class="url">https://www.facebook.com/Foysal.Official<br>.Account</div>
                        <div class="cut-btn"></div>
                    </div>
                </div>
                <div class="meta"><time>7:29 PM</time><svg class="ticks"><use href="#ticks"/></svg></div>
            </div>

            <div class="msg out">
                <p class="text">Vai access dici</p>
                <div class="meta"><time>7:30 PM</time><svg class="ticks"><use href="#ticks"/></svg></div>
            </div>
            <div class="msg out">
                <p class="text">Check den</p>
                <div class="meta"><time>7:30 PM</time><svg class="ticks"><use href="#ticks"/></svg></div>
            </div>
            <div class="msg out">
                <p class="text">Paicen Vai</p>
                <div class="meta"><time>7:31 PM</time><svg class="ticks"><use href="#ticks"/></svg></div>
            </div>

            <div class="msg in tail">
                <p class="deleted"><svg class="blocked"><use href="#blocked"/></svg>This message was deleted</p>
                <div class="meta"><time>7:31 PM</time></div>
            </div>

            <div class="msg out tail">
                <p class="text">Acca r kicu lagbe</p>
                <div class="meta"><time>7:31 PM</time><svg class="ticks"><use href="#ticks"/></svg></div>
            </div>
            <div class="msg out long">
                <p class="text">Ak minutes aktu call dibo Vai</p>
                <div class="meta"><time>7:31 PM</time><svg class="ticks"><use href="#ticks"/></svg></div>
            </div>

            <div class="msg in tail">
                <p class="deleted"><svg class="blocked"><use href="#blocked"/></svg>This message was deleted</p>
                <div class="meta"><time>7:31 PM</time></div>
            </div>

            <div class="msg out tail">
                <p class="text">Vai</p>
                <div class="meta"><time>7:32 PM</time><svg class="ticks"><use href="#ticks"/></svg></div>
            </div>

            <div class="msg in tail">
                <p class="deleted"><svg class="blocked"><use href="#blocked"/></svg>This message was deleted</p>
                <div class="meta"><time>7:32 PM</time></div>
            </div>

            <div class="msg out tail reply">
                <blockquote class="quote">
                    <strong>You</strong>
                    <span>Ak minutes aktu call dibo Vai</span>
                </blockquote>
                <div class="reply-row">
                    <p class="text">?</p>
                    <div class="meta"><time>7:32 PM</time><svg class="ticks"><use href="#ticks"/></svg></div>
                </div>
            </div>

            <div class="msg in tail">
                <p class="deleted"><svg class="blocked"><use href="#blocked"/></svg>This message was deleted</p>
            </div>
        </div>

        <div class="scrollbar"></div>
        <button class="to-bottom" aria-label="Scroll to bottom">
            <svg width="36" height="42" viewBox="0 0 36 42" fill="none" stroke="#9aa2a6" stroke-width="5" stroke-linecap="round">
                <path d="M4 5l14 14L32 5M4 23l14 14 14-14"/>
            </svg>
        </button>

        <form class="composer">
            <div class="field">
                <button type="button" class="icon-btn" aria-label="Stickers">
                    <svg width="60" height="60" viewBox="0 0 60 60" fill="none" stroke="#8c9598" stroke-width="6" stroke-linejoin="round">
                        <path d="M18 3h24q15 0 15 15v15L33 57H18Q3 57 3 42V18Q3 3 18 3zM57 33H46q-11 0-12 12v12"/>
                        <circle cx="20" cy="20" r="5" fill="#8c9598" stroke="none"/><circle cx="41" cy="20" r="5" fill="#8c9598" stroke="none"/>
                        <path d="M16 34h24q-7 3-8 11-13-1-16-11z" fill="#8c9598" stroke="none"/>
                    </svg>
                </button>
                <input type="text" placeholder="Message" aria-label="Message">
                <button type="button" class="icon-btn" aria-label="Attach">
                    <svg width="38" height="60" viewBox="0 0 38 60" fill="none" stroke="#8c9598" stroke-width="5" stroke-linecap="round">
                        <path d="M35 14v27q0 16-16 16T3 41V15Q3 3 14 3t12 12v25q0 7-6 7t-6-7V16"/>
                    </svg>
                </button>
                <button type="button" class="icon-btn camera" aria-label="Camera">
                    <svg width="60" height="54" viewBox="0 0 60 54" fill="none" stroke="#8c9598" stroke-width="6" stroke-linejoin="round">
                        <path d="M3 9h14l5-6h16l5 6h14v42H3z"/><circle cx="30" cy="30" r="10"/>
                    </svg>
                </button>
            </div>
            <button type="button" class="mic" aria-label="Voice message">
                <svg width="42" height="57" viewBox="0 0 42 57">
                    <rect x="12" y="0" width="18" height="36" rx="9" fill="#0b1014"/>
                    <path d="M3 29q1 16 18 16t18-16M21 45v10" fill="none" stroke="#0b1014" stroke-width="5" stroke-linecap="round"/>
                </svg>
            </button>
        </form>
    </main>

    <nav class="navbar">
        <button class="icon-btn" aria-label="Recents"><svg width="60" height="60" viewBox="0 0 60 60" fill="none" stroke="#5f5f5f" stroke-width="6"><rect x="9" y="9" width="42" height="42"/></svg></button>
        <button class="icon-btn" aria-label="Home"><svg width="60" height="60" viewBox="0 0 60 60" fill="none" stroke="#5f5f5f" stroke-width="6"><circle cx="30" cy="30" r="24"/></svg></button>
        <button class="icon-btn" aria-label="Back"><svg width="60" height="60" viewBox="0 0 60 60" fill="none" stroke="#5f5f5f" stroke-width="5" stroke-linejoin="bevel"><path d="M50 6v48L10 30z"/></svg></button>
    </nav>
</body>
</html>
```
FILE: styles.css
```css
* {
    box-sizing: border-box;
}
body {
    margin: 0;
    height: 100vh;
    display: flex;
    flex-direction: column;
    background-color: #0b1014;
    color: #f5fbf8;
    font-family: Roboto, "Noto Sans", sans-serif;
}
h1, h2, p, blockquote {
    margin: 0;
}
svg {
    display: block;
    flex: none;
}
button {
    padding: 0;
    border: none;
    background: none;
    cursor: pointer;
}
.icon-btn {
    flex: none;
    display: block;
}
.sprite {
    position: absolute;
    width: 0;
    height: 0;
}

/* status bar */
.statusbar {
    flex: none;
    height: 110px;
    padding: 0 38px 0 36px;
    display: flex;
    align-items: center;
    color: #fff;
}
.clock {
    flex: 1;
    font-size: 39px;
    font-weight: 500;
}
.s-wifi {
    margin-left: 12px;
}
.volte, .speed {
    display: flex;
    flex-direction: column;
    align-items: center;
    text-align: center;
}
.volte {
    margin: 0 12px;
    font-size: 23px;
    line-height: 27px;
    font-weight: 700;
    height: 48px;
    justify-content: center;
}
.s-signal2 {
    margin-left: 10px;
}
.speed {
    margin: 0 20px;
    font-size: 19px;
    line-height: 23px;
    font-weight: 500;
}
.s-battery {
    margin-left: 6px;
}
.battery-text {
    font-size: 26px;
    fill: #fff;
}

/* header */
.header {
    flex: none;
    height: 165px;
    padding: 0 60px 0 48px;
    display: flex;
    align-items: center;
    border-bottom: 1px solid #1b2226;
}
.avatar {
    margin: 0 36px 0 61px;
}
.av-cyber {
    font: 700 13px Roboto, sans-serif;
    fill: #e6e6e6;
}
.av-71 {
    font: italic 900 25px Roboto, sans-serif;
    fill: #fff;
}
.av-line {
    font: 700 6px Roboto, sans-serif;
    fill: #fff;
}
.av-name {
    font: 900 9px Roboto, sans-serif;
    fill: #fff;
}
.title {
    flex: 1;
    min-width: 0;
    white-space: nowrap;
    font-size: 49px;
    font-weight: 500;
    line-height: 70px;
    color: #f7fbfc;
}
.store {
    margin: 0 60px 0 50px;
}
.caret {
    margin: 0 63px 0 36px;
}

/* chat */
.chat {
    flex: 1;
    min-height: 0;
    position: relative;
    display: flex;
    flex-direction: column;
    overflow: hidden;
}
.wallpaper {
    position: absolute;
    top: 0;
    left: 0;
    width: 100%;
    height: 100%;
}
.doodles {
    fill: none;
    stroke: #20262a;
    stroke-width: 3;
    stroke-linecap: round;
    stroke-linejoin: round;
}
.doodle-text {
    font: 700 44px Roboto, sans-serif;
}
.doodle-text.small {
    font-size: 22px;
    stroke-width: 2;
}
.messages {
    flex: 1;
    min-height: 0;
    position: relative;
    overflow: hidden;
    display: flex;
    flex-direction: column;
    gap: 8px;
    padding: 0 51px;
}
.msg {
    flex: none;
    position: relative;
    display: flex;
    border-radius: 34px;
}
.out {
    align-self: flex-end;
    align-items: flex-end;
    gap: 26px;
    padding: 19px 26px 9px 30px;
    background-color: #144d37;
}
.in {
    align-self: flex-start;
    flex-direction: column;
    align-items: flex-end;
    gap: 22px;
    padding: 24px 25px 8px 30px;
    background-color: #1f272a;
}
.tail {
    margin-top: 22px;
}
.out.tail {
    border-top-right-radius: 0;
}
.in.tail {
    border-top-left-radius: 0;
}
.tail::before {
    content: "";
    position: absolute;
    top: 0;
    width: 22px;
    height: 32px;
    background-color: inherit;
}
.out.tail::before {
    left: 100%;
    margin-left: -1px;
    clip-path: polygon(0 0, 82% 0, 95% 6%, 100% 16%, 95% 28%, 0 100%);
}
.in.tail::before {
    right: 100%;
    margin-right: -1px;
    clip-path: polygon(100% 0, 18% 0, 5% 6%, 0 16%, 5% 28%, 100% 100%);
}
.in:last-child {
    border-bottom-left-radius: 0;
    border-bottom-right-radius: 0;
}
.text {
    font-size: 48px;
    line-height: 56px;
    margin-bottom: 14px;
}
.meta {
    display: flex;
    align-items: center;
    gap: 10px;
    font-size: 36px;
    line-height: 42px;
    color: #9ab5a8;
    white-space: nowrap;
}
.in .meta {
    color: #9fa3a5;
}
.ticks {
    width: 50px;
    height: 32px;
    margin-bottom: 6px;
}
.long {
    flex-direction: column;
    gap: 24px;
}
.long .text {
    margin: 0 11px 0 0;
}
.deleted {
    display: flex;
    gap: 18px;
    margin-right: 18px;
    font-size: 48px;
    line-height: 58px;
    font-style: italic;
    color: #a9acae;
}
.blocked {
    width: 60px;
    height: 60px;
}

/* reply */
.reply {
    display: block;
    padding: 11px 12px 10px;
}
.quote {
    display: flex;
    flex-direction: column;
    padding: 19px 25px 14px 35px;
    border-radius: 24px;
    background: linear-gradient(to right, #21c063 12px, #134231 12px);
    font-size: 42px;
    line-height: 56px;
    color: #9ab5a8;
}
.quote strong {
    font-weight: 500;
    color: #a5e8bf;
}
.reply-row {
    display: flex;
    justify-content: space-between;
    align-items: flex-end;
    padding: 18px 14px 0 18px;
}

/* shared screenshot */
.photo {
    width: 702px;
    padding: 0 12px 12px;
    border-radius: 0 0 36px 36px;
}
.forward {
    position: absolute;
    top: 48px;
    right: 100%;
    margin-right: 24px;
    width: 92px;
    height: 92px;
    padding-left: 16px;
    border-radius: 50%;
    background-color: rgba(16, 28, 38, .6);
}
.shot {
    flex: 1;
    overflow: hidden;
    border-radius: 0 0 24px 24px;
    background-color: #262729;
    color: #e4e5e7;
}
.row {
    display: flex;
    align-items: center;
    gap: 22px;
    height: 92px;
    padding: 0 23px;
    border-bottom: 2px solid #47484a;
    font-size: 28px;
}
.row.cut {
    height: 48px;
    align-items: flex-end;
    padding-bottom: 24px;
    line-height: 40px;
}
.info {
    padding: 31px 30px 0;
    border-top: 14px solid #0f0f10;
}
.info h2 {
    font-size: 38px;
    line-height: 44px;
    color: #f2f3f5;
}
.info p {
    margin-top: 7px;
    padding-bottom: 30px;
    border-bottom: 2px solid #444547;
    font-size: 32px;
    line-height: 37px;
    color: #97999c;
}
.url {
    margin: 20px 0 21px;
    font-size: 28px;
    line-height: 38px;
    font-weight: 500;
}
.cut-btn {
    height: 20px;
    border-radius: 12px 12px 0 0;
    background: linear-gradient(to right, #3a3b3c 40%, #2a2b2d);
}
.photo .meta {
    position: absolute;
    right: 27px;
    bottom: 22px;
    color: #fff;
}

/* over the chat */
.scrollbar {
    position: absolute;
    right: 0;
    top: 1862px;
    width: 12px;
    height: 157px;
    background-color: #5c6063;
}
.to-bottom {
    position: absolute;
    right: 36px;
    bottom: 215px;
    width: 96px;
    height: 96px;
    display: flex;
    align-items: center;
    justify-content: center;
    border-radius: 50%;
    background-color: #28333a;
}

/* composer */
.composer {
    position: relative;
    display: flex;
    align-items: center;
    gap: 14px;
    padding: 10px 13px 13px 14px;
}
.field {
    flex: 1;
    min-width: 0;
    display: flex;
    align-items: center;
    height: 142px;
    padding: 0 40px;
    border-radius: 71px;
    background-color: #1f272a;
}
.field input {
    flex: 1;
    min-width: 0;
    margin: 0 40px;
    padding: 0;
    border: none;
    outline: none;
    background: none;
    font-family: inherit;
    font-size: 54px;
    color: #f5fbf8;
}
.field input::placeholder {
    color: #8c9598;
    opacity: 1;
}
.camera {
    margin-left: 95px;
}
.mic {
    flex: none;
    width: 144px;
    height: 144px;
    display: flex;
    align-items: center;
    justify-content: center;
    border-radius: 50%;
    background-color: #21c063;
}

/* system navigation */
.navbar {
    flex: none;
    height: 144px;
    display: flex;
    align-items: center;
    justify-content: space-evenly;
    padding: 0 30px;
    background-color: #000;
}
```
